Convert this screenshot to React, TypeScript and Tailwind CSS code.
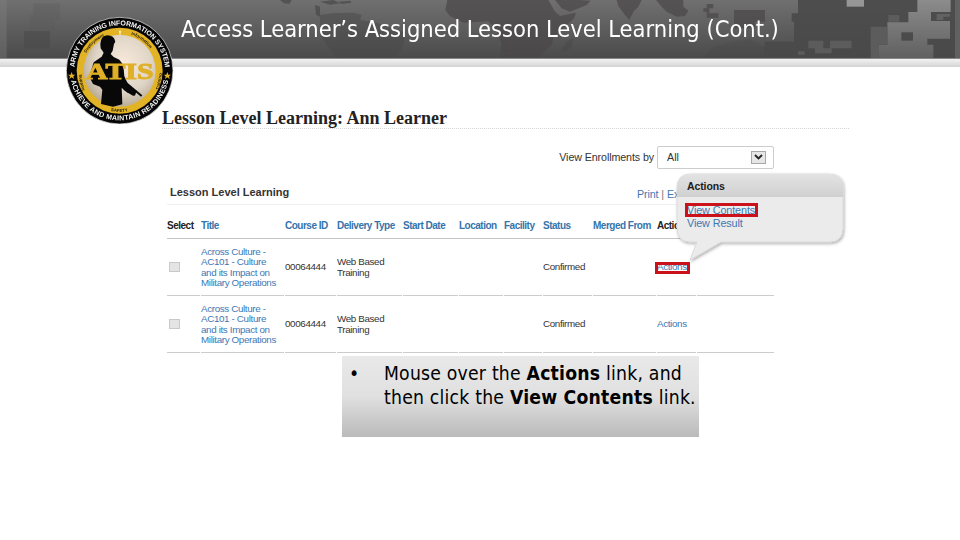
import clsx from 'clsx';

const columns = ['Select', 'Title', 'Course ID', 'Delivery Type', 'Start Date', 'Location', 'Facility', 'Status', 'Merged From', 'Actions', ''];

const rows = [
  { id: '00064444', title: ['Across Culture -', 'AC101 - Culture', 'and its Impact on', 'Military Operations'], highlight: true },
  { id: '00064444', title: ['Across Culture -', 'AC101 - Culture', 'and its Impact on', 'Military Operations'], highlight: false },
];

const gridCols = 'grid grid-cols-[33px_83px_51px_65px_55px_44px_38px_49px_63px_39px_77px] gap-x-px';

function HeaderArt() {
  return (
    <svg className="absolute inset-0 h-[58px] w-[960px]" viewBox="0 0 2880 174" preserveAspectRatio="none">
      <defs>
        <linearGradient id="camo" x1="0" y1="0" x2="0" y2="174" gradientUnits="userSpaceOnUse">
          <stop offset="0" stopColor="#8c8c8c" />
          <stop offset="1" stopColor="#606060" />
        </linearGradient>
      </defs>
      {/* left blocks */}
      <path d="M0 0H20V174H0Z" fill="#858585" opacity=".35" />
      <path d="M100 10H180V60H165V92H88V45H100Z" fill="#5a5a5a" opacity=".3" />
      <path d="M72 93H150V145H72Z" fill="#484848" opacity=".5" />
      {/* world map */}
      <g fill="#4a4848" opacity=".72">
        <path d="M840 0H875L868 12L852 10ZM945 15L960 20V50L948 44Z" />
        <path d="M960 45L1000 40L1060 38L1085 45L1080 60L1130 68L1180 88L1212 95V130L1190 174H1010L970 120L960 100Z" opacity=".7" />
        <path d="M960 5L1000 0L1020 10L990 14ZM1015 5L1050 2L1055 8L1025 12Z" />
        <path d="M1342 0H1645L1665 35L1680 48L1728 38L1722 55L1690 85L1660 110L1655 135L1610 174H1500L1505 130L1485 85L1465 64L1390 68L1350 48L1336 30Z" />
        <path d="M1665 0H1740L1772 2L1760 15L1710 35L1685 25Z" />
        <path d="M1850 0H1925L1915 20L1900 35L1888 60L1875 45L1855 18Z" />
        <path d="M1700 125L1720 115L1715 140L1695 155L1685 150Z" opacity=".6" />
        <path d="M1968 0H2050V20L2065 32L2055 48L2030 50L2000 35L1985 20Z" />
        <path d="M2120 12H2140V25H2128V40H2155V53H2120V35H2110V25H2120Z" />
        <path d="M2202 30H2295V65H2265V85H2202Z" />
        <path d="M2140 140L2200 125L2250 118L2300 145V174H2110Z" opacity=".4" />
      </g>
      {/* digital camouflage */}
      <path d="M2394 0H2880V174H2294V125H2365V125H2382V65H2375V40H2394Z" fill="#494949" opacity=".88" />
      <path d="M2540 0H2592V20H2540Z" fill="#969696" />
      <path d="M2752 0H2852V36H2793V63H2850V116H2782V134H2800V174H2635V134H2662V67H2725V36H2752Z" fill="url(#camo)" />
      <path d="M2665 45H2698V65H2665ZM2612 80H2662V134H2635V174H2612Z" fill="#5c5c5c" />
      <path d="M2490 122H2555V145H2495V160H2445V145H2425V122H2470V145H2490ZM2394 154H2414V164H2394Z" fill="#5c5c5c" />
      <path d="M2704 97H2739V122H2704Z" fill="#4b4b4b" />
      <path d="M2810 42H2850V50H2830V60H2810ZM2865 0H2880V174H2865Z" fill="#727272" opacity=".6" />
    </svg>
  );
}

function Logo() {
  return (
    <svg className="absolute left-[56px] top-[8px] h-[125px] w-[130px]" viewBox="0 0 390 375">
      <defs>
        <radialGradient id="disc" cx=".55" cy=".4" r=".65">
          <stop offset="0" stopColor="#f8eadb" />
          <stop offset=".6" stopColor="#dfd5c7" />
          <stop offset="1" stopColor="#b1a48e" />
        </radialGradient>
        <path id="arcTop" d="M55 188A136 136 0 0 1 327 188" />
        <path id="arcBottom" d="M42 188A149 149 0 0 0 340 188" />
        <path id="arcInner" d="M78 188A113 113 0 0 1 304 188" />
        <path id="arcSafety" d="M67 188A124 124 0 0 0 315 188" />
      </defs>
      <circle cx="191" cy="188" r="160" fill="#050505" stroke="#f3f3f3" strokeWidth="2" />
      <circle cx="191" cy="188" r="129" fill="#e3b326" />
      <circle cx="191" cy="188" r="108" fill="url(#disc)" />
      <path d="M188 66L192 85L196 66L192 70Z" fill="#fff3c9" />
      {/* soldier */}
      <path d="M133 108Q134 84 154 82Q174 82 178 101L174 108L170 128L164 138L173 147L190 155L202 171L205 205L219 235L242 250L232 264L207 249L197 239L199 289L171 296L135 288L139 245L132 236L111 228L100 206L113 163L137 146L143 134L134 121Z" fill="#080808" />
      <path d="M206 221L257 264M223 232L215 254M240 246L234 262" stroke="#080808" strokeWidth="6" />
      <text x="90" y="212" textLength="203" lengthAdjust="spacingAndGlyphs" fontFamily="Liberation Serif, serif" fontWeight="bold" fontSize="70" fill="#e0b029" stroke="#e0b029" strokeWidth="3">ATIS</text>
      <g fill="#f5f5f5" fontFamily="Liberation Sans, sans-serif" fontWeight="bold" fontSize="21">
        <text><textPath href="#arcTop" startOffset="10" textLength="408" lengthAdjust="spacing">ARMY TRAINING INFORMATION SYSTEM</textPath></text>
        <text><textPath href="#arcBottom" startOffset="30" textLength="408" lengthAdjust="spacing">ACHIEVE AND MAINTAIN READINESS</textPath></text>
      </g>
      <g fill="#20180a" fontFamily="Liberation Sans, sans-serif" fontWeight="bold" fontSize="13">
        <text><textPath href="#arcInner" startOffset="55">Deployment</textPath></text>
        <text><textPath href="#arcInner" startOffset="212">Information</textPath></text>
        <text><textPath href="#arcSafety" startOffset="168">SAFETY</textPath></text>
        <text transform="translate(68 200) rotate(78)">Support</text>
        <text transform="translate(308 246) rotate(-78)">Training</text>
      </g>
      <path d="M47 192L50 200L58 200L52 205L54 213L47 208L40 213L42 205L36 200L44 200Z" fill="#e3b326" />
      <path d="M334 192L337 200L345 200L339 205L341 213L334 208L327 213L329 205L323 200L331 200Z" fill="#e3b326" />
    </svg>
  );
}

function ActionsPopup() {
  return (
    <div className="absolute left-[672px] top-[170px] h-[98px] w-[180px]">
      <svg className="absolute inset-0" width="180" height="98" viewBox="0 0 180 98">
        <defs>
          <linearGradient id="popHead" x1="0" y1="0" x2="0" y2="1">
            <stop offset="0" stopColor="#e3e3e3" />
            <stop offset="1" stopColor="#d0d0d0" />
          </linearGradient>
          <filter id="popShadow" x="-10%" y="-10%" width="120%" height="130%">
            <feDropShadow dx="1" dy="1.5" stdDeviation="1.8" floodOpacity=".32" />
          </filter>
        </defs>
        <path d="M19 4H157Q171 4 171 18V58Q171 72 157 72H49L18 90L25 72H19Q5 72 5 58V18Q5 4 19 4Z" fill="#ebebeb" stroke="#d2d2d2" strokeWidth=".7" filter="url(#popShadow)" />
        <path d="M5 27V18Q5 4 19 4H157Q171 4 171 18V27Z" fill="url(#popHead)" />
      </svg>
      <div className="relative pl-[15px] pt-[10px] text-[10.800px] leading-[13px] text-[#3c78b4]">
        <p className="text-[10.500px] font-bold tracking-[-0.1px] text-[#1c1c1c]">Actions</p>
        <p className="ml-[-2px] mt-[10px] h-[14px] w-[73px] overflow-hidden whitespace-nowrap border-[3px] border-[#cb1119] bg-[#eeeeee] text-[10.800px] leading-[9px] tracking-[-0.1px]">
          <span className="ml-[-1px]">View Contents</span>
        </p>
        <p className="tracking-[-0.1px]">View Result</p>
      </div>
    </div>
  );
}

export default function App() {
  return (
    <div className="relative h-[540px] w-[960px] overflow-hidden bg-white font-['Liberation_Sans',Arial,sans-serif]">
      <header className="h-[67px]">
        <div className="relative h-[59px] border-b border-[#888888] bg-linear-to-b from-[#707070] to-[#4b4b4b]">
          <HeaderArt />
          <h1 className="relative whitespace-nowrap pl-[181px] pt-[13px] font-['DejaVu_Sans_Condensed','DejaVu_Sans',sans-serif] text-[23.500px] leading-[32px] tracking-[-0.030px] text-white [font-stretch:75%]">
            Access Learner’s Assigned Lesson Level Learning (Cont.)
          </h1>
        </div>
        <div className="h-[8px] bg-linear-to-b from-[#f2f2f2] to-[#d4d4d4]" />
      </header>
      <Logo />

      <main className="pl-[162px] pt-[41px]">
        <h2 className="h-[21px] w-[687px] whitespace-nowrap border-b border-dotted border-[#d5d5d5] font-['Liberation_Serif',serif] text-[18px] font-bold leading-[21px] text-[#222222]">
          Lesson Level Learning: Ann Learner
        </h2>

        <div className="mt-[17px] flex h-[22px] w-[612px] items-center justify-end gap-[3px] text-[10.700px] text-[#333333]">
          <span className="whitespace-nowrap tracking-[-0.1px]">View Enrollments by</span>
          <div className="flex h-[23px] w-[117px] items-center justify-between rounded-[2px] border border-[#cccccc] pl-[9px] pr-[7px]">
            <span>All</span>
            <span className="flex h-[13px] w-[15px] items-center justify-center border border-[#a8a8a8] bg-[#e6e6e6]">
              <svg width="9" height="6" viewBox="0 0 9 6" fill="none" stroke="#222222" strokeWidth="1.8">
                <path d="M1 1L4.500 4.500L8 1" />
              </svg>
            </span>
          </div>
        </div>

        <section className="ml-[5px] w-[607px]">
          <div className="flex h-[37px] items-end justify-between border-b border-[#f0f0f0] pb-[4px] pl-[3px]">
            <h3 className="mb-[1px] whitespace-nowrap text-[11px] font-bold leading-[13px] text-[#333333]">Lesson Level Learning</h3>
            <p className="w-[137px] whitespace-nowrap text-[10.700px] leading-[11px] tracking-[-0.1px] text-[#3c78b4]">
              Print <span className="text-[#777777]">|</span> Export
            </p>
          </div>

          <div className={clsx(gridCols, 'h-[34px] border-b border-[#c5c5c5] pt-[15px] text-[10px] font-bold leading-[12px] text-[#3574ab]')}>
            {columns.map((name) => (
              <span key={name} className={clsx('whitespace-nowrap tracking-[-0.5px]', (name === 'Select' || name === 'Actions') && 'text-[#222222]')}>
                {name}
              </span>
            ))}
          </div>

          {rows.map((row, i) => (
            <div key={i} className={clsx(gridCols, 'h-[57px] text-[9.800px] leading-[10.400px] tracking-[-0.350px] text-[#333333] [&>div]:flex [&>div]:items-center [&>div]:border-b [&>div]:border-[#cccccc] [&>div]:pt-[1px] [&>div]:whitespace-nowrap')}>
              <div>
                <span className="mb-[1px] ml-[2px] h-[10px] w-[11px] border border-[#c9c9c9] bg-[#e4e4e4]" />
              </div>
              <div className="text-[#3c78b4]">
                <p>
                  {row.title.map((line) => (
                    <span key={line} className="block">{line}</span>
                  ))}
                </p>
              </div>
              <div>{row.id}</div>
              <div>Web Based<br />Training</div>
              <div />
              <div />
              <div />
              <div>Confirmed</div>
              <div />
              <div className="text-[#3c78b4]">
                {row.highlight ? (
                  <span className="ml-[-2px] flex h-[12px] w-[35px] shrink-0 items-center overflow-hidden border-[3px] border-[#cb1119]">
                    <span className="ml-[-1px]">Actions</span>
                  </span>
                ) : (
                  <span>Actions</span>
                )}
              </div>
              <div />
            </div>
          ))}
        </section>

        <div className="ml-[180px] mt-[3px] flex h-[81px] w-[357px] bg-linear-to-b from-[#e9e9e9] via-[#e0e0e0] to-[#bababa] pl-[7px] pt-[6px] font-['DejaVu_Sans_Condensed','DejaVu_Sans',sans-serif] text-[19.200px] leading-[24px] tracking-[0.220px] text-black [font-stretch:75%]">
          <span className="w-[35px]">•</span>
          <p className="whitespace-nowrap">
            Mouse over the <b>Actions</b> link, and
            <br />
            then click the <b>View Contents</b> link.
          </p>
        </div>
      </main>
      <ActionsPopup />
    </div>
  );
}
